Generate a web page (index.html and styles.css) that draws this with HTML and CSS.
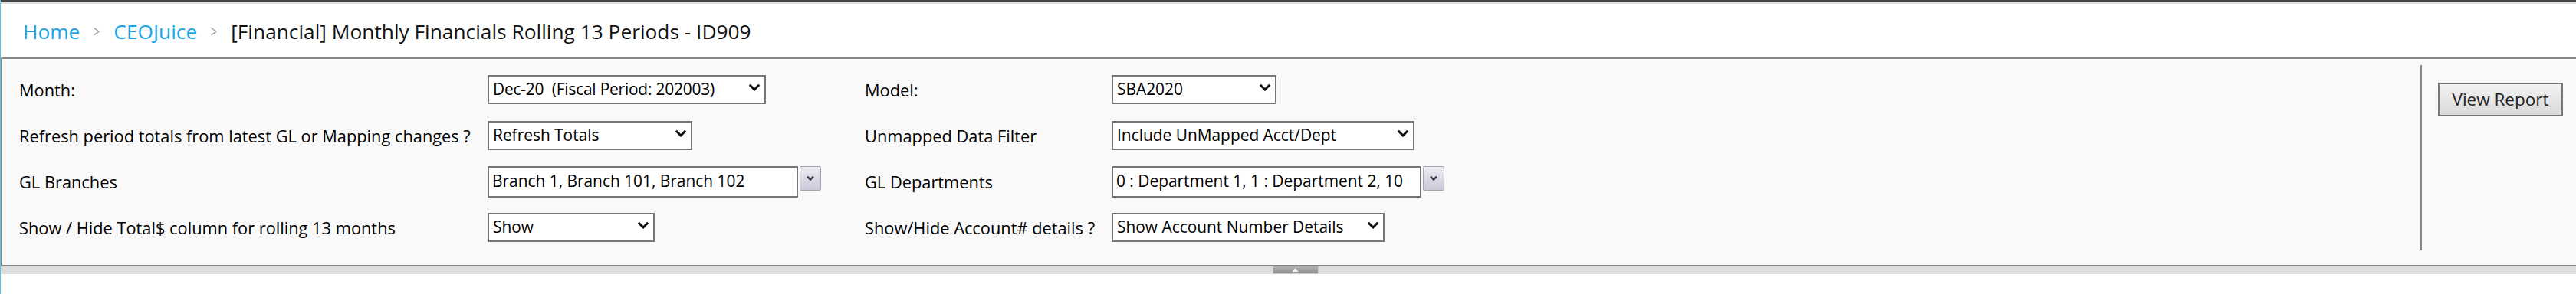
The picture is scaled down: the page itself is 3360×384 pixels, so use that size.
FILE: index.html
```html
<!DOCTYPE html>
<html lang="en">
<head>
    <meta charset="UTF-8">
    <title>[Financial] Monthly Financials Rolling 13 Periods - ID909</title>
    <link rel="stylesheet" href="styles.css">
</head>
<body>

    <div class="topbar"></div>

    <header class="header">
        <nav class="breadcrumb">
            <a href="#" class="crumb-link">Home</a>
            <span class="crumb-sep">&gt;</span>
            <a href="#" class="crumb-link">CEOJuice</a>
            <span class="crumb-sep">&gt;</span>
            <span class="crumb-current">[Financial] Monthly Financials Rolling 13 Periods - ID909</span>
        </nav>
    </header>

    <section class="params">
        <div class="params-grid">
            <!-- row 1 -->
            <label class="param-label">Month:</label>
            <div class="param-cell">
                <div class="select w-month"><span>Dec-20&nbsp; (Fiscal Period: 202003)</span><svg class="chev" viewBox="0 0 16 10"><path d="M1.8 1.8 L8 8 L14.2 1.8"/></svg></div>
            </div>
            <label class="param-label">Model:</label>
            <div class="param-cell">
                <div class="select w-model"><span>SBA2020</span><svg class="chev" viewBox="0 0 16 10"><path d="M1.8 1.8 L8 8 L14.2 1.8"/></svg></div>
            </div>

            <!-- row 2 -->
            <label class="param-label">Refresh period totals from latest GL or Mapping changes ?</label>
            <div class="param-cell">
                <div class="select w-refresh"><span>Refresh Totals</span><svg class="chev" viewBox="0 0 16 10"><path d="M1.8 1.8 L8 8 L14.2 1.8"/></svg></div>
            </div>
            <label class="param-label">Unmapped Data Filter</label>
            <div class="param-cell">
                <div class="select w-unmapped"><span>Include UnMapped Acct/Dept</span><svg class="chev" viewBox="0 0 16 10"><path d="M1.8 1.8 L8 8 L14.2 1.8"/></svg></div>
            </div>

            <!-- row 3 -->
            <label class="param-label">GL Branches</label>
            <div class="param-cell">
                <div class="multi w-branch">Branch 1, Branch 101, Branch 102</div>
                <button class="multi-btn"><svg viewBox="0 0 12 8"><path d="M2 1.5 L6 5.5 L10 1.5"/></svg></button>
            </div>
            <label class="param-label">GL Departments</label>
            <div class="param-cell">
                <div class="multi w-dept">0 : Department 1, 1 : Department 2, 10</div>
                <button class="multi-btn"><svg viewBox="0 0 12 8"><path d="M2 1.5 L6 5.5 L10 1.5"/></svg></button>
            </div>

            <!-- row 4 -->
            <label class="param-label">Show / Hide Total$ column for rolling 13 months</label>
            <div class="param-cell">
                <div class="select w-show"><span>Show</span><svg class="chev" viewBox="0 0 16 10"><path d="M1.8 1.8 L8 8 L14.2 1.8"/></svg></div>
            </div>
            <label class="param-label">Show/Hide Account# details ?</label>
            <div class="param-cell">
                <div class="select w-acct"><span>Show Account Number Details</span><svg class="chev" viewBox="0 0 16 10"><path d="M1.8 1.8 L8 8 L14.2 1.8"/></svg></div>
            </div>
        </div>

        <div class="params-action">
            <button class="btn-view">View Report</button>
        </div>
    </section>

    <div class="splitter">
        <span class="splitter-handle"><svg viewBox="0 0 10 6"><path d="M5 0 L10 6 L0 6 Z"/></svg></span>
    </div>

</body>
</html>
```

FILE: styles.css
```css
:root {
    --link: #1aa4e6;
    --border-dark: #888888;
    --panel-bg: #f9f9f9;
    --control-border: #767676;
    --text: #000000;
}

body {
    margin: 0;
    font-family: 'Open Sans', 'Noto Sans', sans-serif;
    color: var(--text);
    background: #ffffff;
    border-left: 1px solid #55c4ec;
    min-height: 384px;
    box-sizing: border-box;
}

.topbar {
    height: 3px;
    background: #444444;
    border-bottom: 2px solid #e2e2e2;
}

/* ---------- breadcrumb header ---------- */
.header {
    height: 70px;
    display: flex;
    align-items: center;
    padding-left: 29px;
}
.breadcrumb {
    display: flex;
    align-items: center;
    gap: 16px;
    font-size: 26.3px;
    margin-top: 2px;
}
.crumb-link { color: var(--link); text-decoration: none; }
.crumb-sep { color: #9a9a9a; font-size: 21px; transform: scaleX(0.7); }
.crumb-current { color: #111111; }

/* ---------- parameter panel ---------- */
.params {
    display: flex;
    background: var(--panel-bg);
    border-top: 2px solid var(--border-dark);
    border-bottom: 2px solid var(--border-dark);
    border-left: 2px solid var(--border-dark);
    padding: 8px 0 19px 22px;
}

.params-grid {
    flex: 1;
    display: grid;
    grid-template-columns: 611px 492px 322px 1fr;
    grid-auto-rows: 60px;
    align-items: center;
    padding-top: 2px;
    font-size: 21.8px;
}
.param-label { white-space: nowrap; }
.param-cell { display: flex; align-items: center; gap: 2px; }

.select {
    box-sizing: border-box;
    height: 38px;
    display: flex;
    align-items: center;
    justify-content: space-between;
    padding: 0 5px 2px 5px;
    background: #ffffff;
    border: 2px solid var(--control-border);
    font-size: 20.9px;
    white-space: nowrap;
}
.select .chev {
    width: 16px; height: 10px;
    fill: none; stroke: #111111; stroke-width: 3;
    flex-shrink: 0;
    margin-bottom: 4px;
}
.w-month { width: 363px; }
.w-month span { letter-spacing: -0.2px; }
.w-refresh { width: 267px; }
.w-show { width: 218px; }
.w-model { width: 215px; }
.w-unmapped { width: 395px; }
.w-acct { width: 356px; }

.multi {
    box-sizing: border-box;
    height: 41px;
    display: flex;
    align-items: center;
    padding: 0 4px 2px 4px;
    background: #ffffff;
    border: 2px solid var(--control-border);
    font-size: 20.9px;
    white-space: nowrap;
    overflow: hidden;
}
.w-branch { width: 405px; }
.w-dept { width: 404px; }

.multi-btn {
    width: 28px; height: 32px;
    margin-top: -8px;
    padding: 0;
    display: flex; align-items: center; justify-content: center;
    border: 1px solid #a5a5b2;
    border-radius: 2px;
    background: linear-gradient(#ececf3, #c9c9d8);
}
.multi-btn svg { width: 12px; height: 8px; fill: none; stroke: #333344; stroke-width: 2.4; }

.params-action {
    border-left: 2px solid var(--border-dark);
    padding: 23px 17px 0 21px;
}
.btn-view {
    width: 163px;
    height: 44px;
    font-family: inherit;
    font-size: 22.5px;
    color: #222222;
    border: 2px solid #777777;
    background: linear-gradient(#f2f2f2, #dadada);
    padding: 0 0 2px;
}

/* ---------- collapse splitter ---------- */
.splitter {
    height: 10px;
    background: #dddddd;
    display: flex;
    justify-content: center;
}
.splitter-handle {
    width: 60px;
    height: 11px;
    margin-top: -1px;
    margin-left: 18px;
    display: flex; align-items: center; justify-content: center;
    background: linear-gradient(#b4b4b4, #8c8c8c);
    border: 1px solid #c8c8c8;
    box-sizing: border-box;
}
.splitter-handle svg { width: 9px; height: 5px; fill: #f4f4f4; }
```
